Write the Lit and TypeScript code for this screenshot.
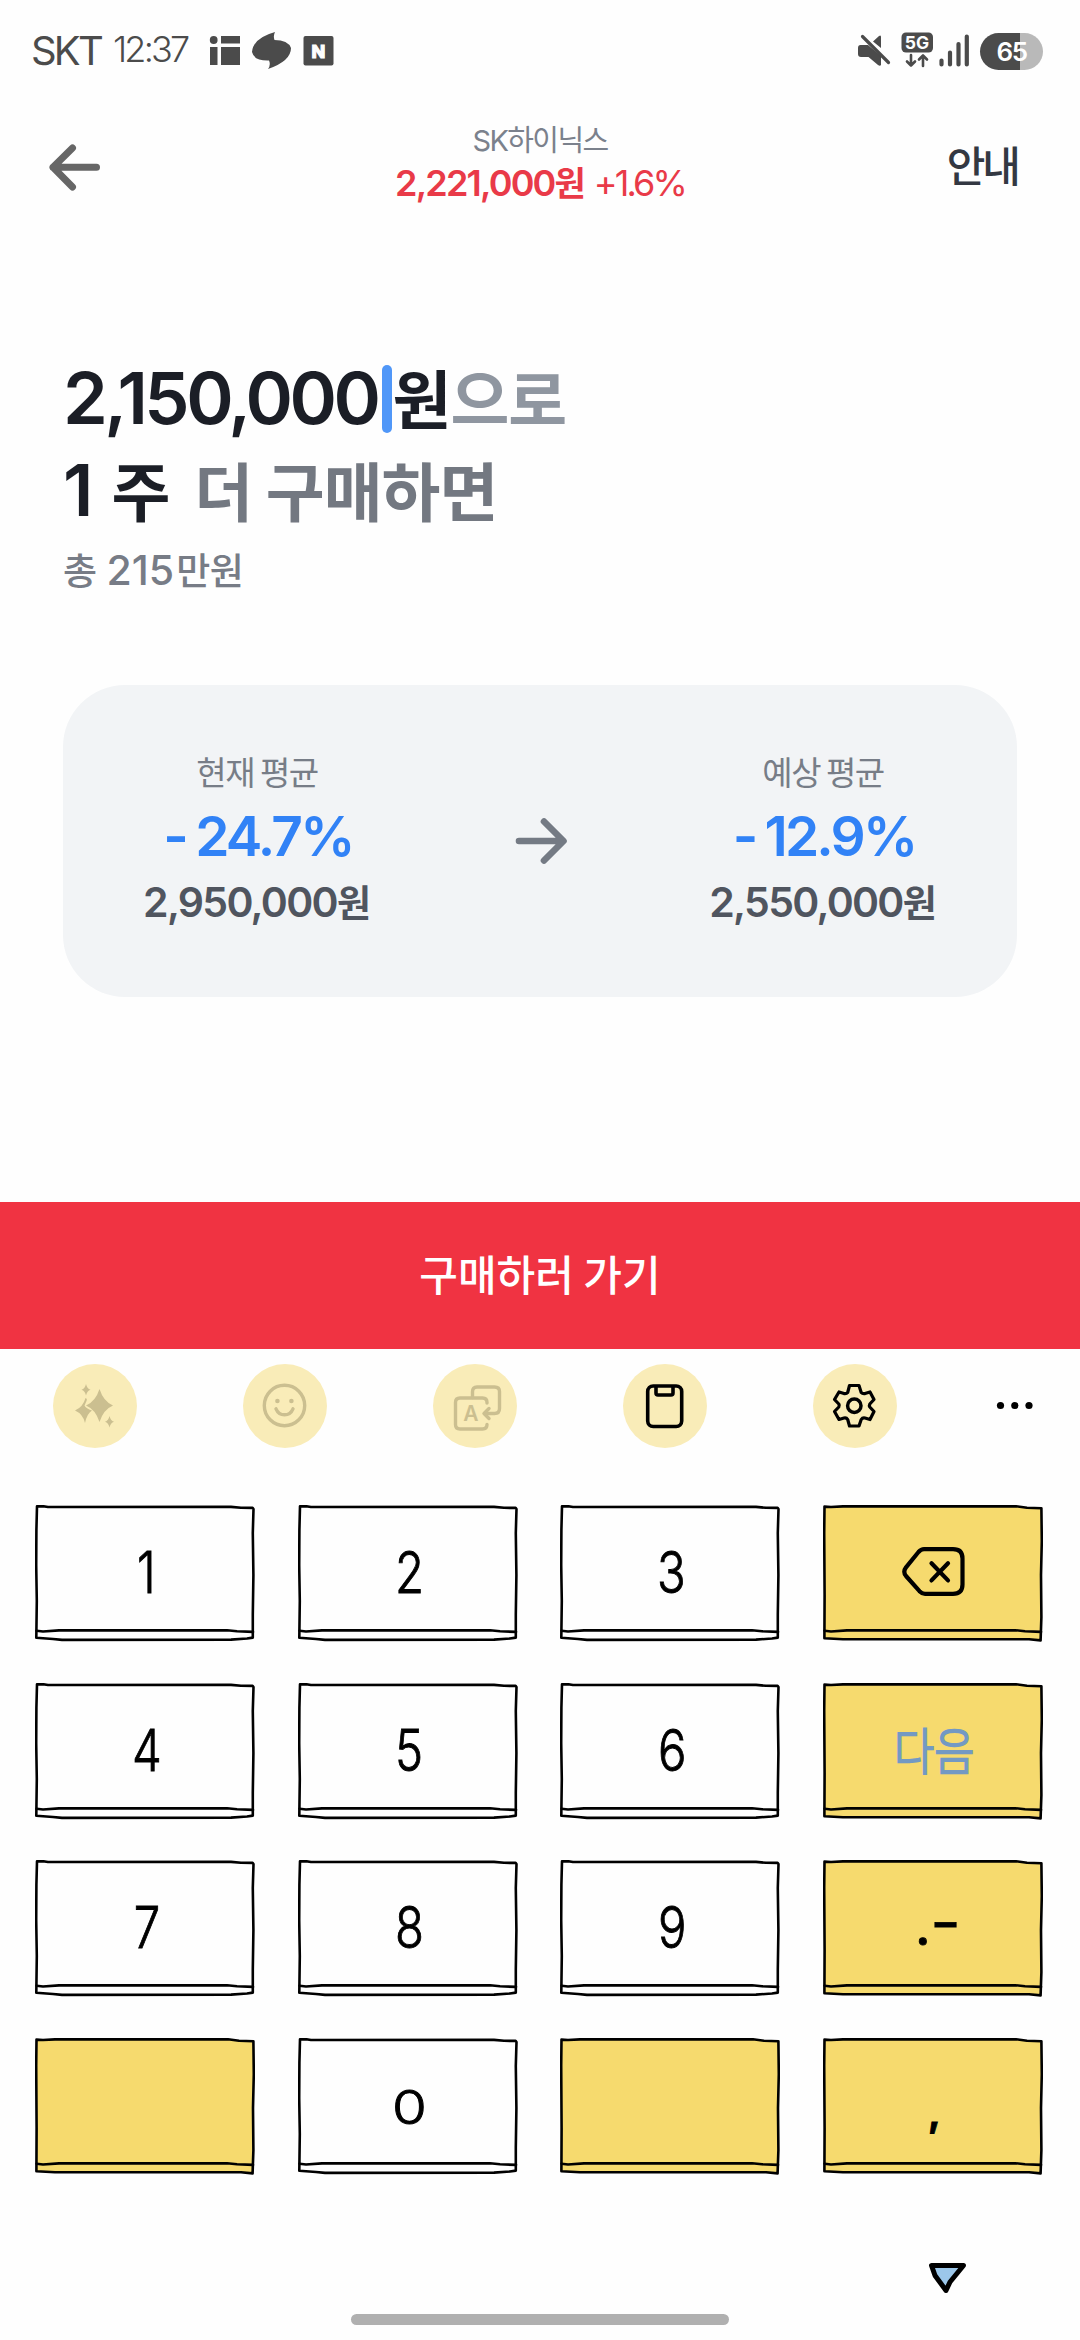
import { LitElement, html, svg, css, nothing } from "lit";
import { customElement, property } from "lit/decorators.js";
import { classMap } from "lit/directives/class-map.js";

type Key = { label?: string; accent?: boolean; kind?: string };

const KEYS: Key[] = [
  { label: "1" }, { label: "2" }, { label: "3" }, { accent: true, kind: "delete" },
  { label: "4" }, { label: "5" }, { label: "6" }, { label: "다음", accent: true, kind: "next" },
  { label: "7" }, { label: "8" }, { label: "9" }, { label: ".-", accent: true, kind: "marks" },
  { accent: true }, { label: "0", kind: "zero" }, { accent: true }, { label: ",", accent: true, kind: "comma" },
];

@customElement("sketch-key")
class SketchKey extends LitElement {
  @property({ attribute: false }) key: Key = {};

  static styles = css`
    :host { display: grid; width: 220px; height: 137px; }
    .frame, .face { grid-area: 1 / 1; }
    .frame { display: block; }
    .line { fill: none; stroke: #000; stroke-width: 2.6; stroke-linejoin: round; stroke-linecap: round; }
    .body { fill: #fefefe; stroke: #000; stroke-width: 2.6; stroke-linejoin: round; }
    .accent .body { fill: #f6da6e; }
    .face {
      display: flex; justify-content: center; align-items: center;
      width: 220px; height: 135px; padding-left: 3px; box-sizing: border-box;
      font-family: Inter, "Noto Sans CJK KR", sans-serif;
      font-weight: 300; font-size: 57px; line-height: 135px; color: #000;
      -webkit-text-stroke: 0.9px currentColor;
    }
    .face span { display: block; transform: scaleX(0.83); }
    .delete svg { margin-top: -2px; }
    .next { font-size: 46px; color: #7399c3; font-family: "Noto Sans CJK KR", sans-serif; line-height: 126px; -webkit-text-stroke-width: 1.8px; }
    .next span { transform: translateY(-2px) scale(0.95, 1.08); }
    .marks { font-weight: 500; font-size: 50px; }
    .marks span { transform: none; }
    .marks .dash { transform: translate(4px, -5px) scaleX(1.3); }
    .comma { font-weight: 700; font-size: 38px; }
    .comma span { transform: translateY(7px); }
    .zero { font-size: 47px; }
    .zero span { transform: translateY(1px) scaleX(1.2); }
  `;

  private face() {
    const { label, kind } = this.key;
    if (kind === "delete") {
      return html`<svg width="64" height="52" viewBox="0 0 64 52">
        <g fill="none" stroke="#000" stroke-width="4.2" stroke-linecap="round" stroke-linejoin="round">
          <path d="M22 3.2 H51 Q60.5 3.2 60.5 12.5 V38.5 Q60.5 47.8 51 47.8 H23 Q20 47.8 17.5 45.2 L4 30 Q0.6 25.8 4 21.4 L16.500 6 Q19 3.2 22 3.2 Z" />
          <path d="M29.5 17.2 L46 34.400 M46 17.2 L29.5 34.400" />
        </g>
      </svg>`;
    }
    if (kind === "marks") return html`<span>.</span><span class="dash">-</span>`;
    return label ? html`<span>${label}</span>` : nothing;
  }

  render() {
    const { accent, kind } = this.key;
    const outline = accent
      ? "M1.5 1.6 L8 2 L20 1.4 L193 1.3 L204 2.8 L218.4 3.2 L218.8 36 L218 70 L218.4 112 L217.6 135.4 L206 134.3 L20 134.2 L1.4 133.3 L1.6 90 L1.2 28 Z"
      : "M2 1.4 L8 1.2 L13 2 L196 1.9 L206 2.8 L217.6 2.9 L218.5 4 L217.8 28 L218.4 70 L217.8 110 L217.8 132.6 L212 133.5 L196 134.6 L27 134.9 L18 134 L1.3 132.8 L1.8 96 L1.2 60 L1.4 25 Z";
    return html`
      <svg class=${classMap({ frame: true, accent: !!accent })} width="220" height="137" viewBox="0 0 220 137">
        <path class="body" d=${outline} />
        <path class="line" d="M1.6 125.7 L8 126.5 L24 125.4 L192 125.2 L202 126.3 L218 126.9" />
      </svg>
      <div class=${classMap({ face: true, [kind ?? "digit"]: true })}>${this.face()}</div>
    `;
  }
}

const disabled = "#cbbf90";
const toolIcons = [
  svg`<g fill=${disabled}>
    <path d="M46.500 25 Q50.500 37.500 60 41.500 Q50.500 45.500 46.500 58 Q42.500 45.500 33 41.500 Q42.500 37.500 46.500 25 Z" />
    <path d="M32.500 34 Q34.500 34.500 33.500 37 L31.500 41.500 Q33 44.500 39 46.500 Q34 49.500 32 59 Q30 50 22 46.500 Q30 43 32.500 34 Z" />
    <path d="M33 20 Q34 24.500 37.500 25.700 Q34 27 33 31.500 Q32 27 28.500 25.700 Q32 24.500 33 20 Z" />
    <path d="M56.500 52 Q57.500 56.500 61 57.700 Q57.500 59 56.500 63.500 Q55.500 59 52 57.700 Q55.500 56.500 56.500 52 Z" />
  </g>`,
  svg`<g fill="none" stroke=${disabled} stroke-width="3.400" stroke-linecap="round">
    <circle cx="41.500" cy="41.500" r="20.200" />
    <path d="M33 44.800 Q35.500 50.800 41.500 50.800 Q47.500 50.800 50 44.800" />
    <circle cx="34.400" cy="37" r="2.300" fill=${disabled} stroke="none" />
    <circle cx="48.400" cy="37" r="2.300" fill=${disabled} stroke="none" />
  </g>`,
  svg`<g fill="none" stroke=${disabled} stroke-width="3.400" stroke-linecap="round" stroke-linejoin="round">
    <path d="M54 39 V38.500 Q54 34 49.500 34 H27 Q22.500 34 22.500 38.500 V60.500 Q22.500 65 27 65 H49.500 Q54 65 54 60.500" />
    <path d="M39.500 33.500 V28 Q39.500 23 44 23 H61.500 Q66.500 23 66.500 27.500 V44.500 Q66.500 49.500 61.500 49.500 H51.500" />
    <path d="M56 44.500 L51 49.500 L56 54.500" />
  </g>
  <text x="38" y="57" text-anchor="middle" font-family="Inter, sans-serif" font-weight="600" font-size="21" fill=${disabled}>A</text>`,
  svg`<g fill="none" stroke="#000" stroke-width="3.600" stroke-linejoin="round">
    <rect x="24.700" y="22" width="34" height="40.500" rx="5.500" />
    <path d="M33 22 V29 Q33 31 35 31 H48 Q50 31 50 29 V22" />
  </g>`,
  svg`<g fill="none" stroke="#000" stroke-width="3.200" stroke-linejoin="round">
    <path d="M36.500 21.500 H46 L48.200 28.500 Q49.500 30 52 29.600 L57 28 L61 35.500 L56.800 40 Q56 41.500 56.800 43 L61 47.500 L57 55.500 L52 54 Q49.500 53.500 48.200 55.500 L46 62 H36.500 L34.700 55.500 Q33.500 53.500 31 54 L26 55.500 L21.500 47.500 L25.800 43 Q26.800 41.500 25.800 40 L21.500 35.500 L26 28 L31 29.600 Q33.500 30 34.700 28.500 Z" />
    <circle cx="41.300" cy="41.700" r="6.700" stroke-width="3.500" />
  </g>`,
];

@customElement("app-root")
export class AppRoot extends LitElement {
  static styles = css`
    :host {
      display: flex; flex-direction: column;
      width: 1080px; height: 2340px; overflow: hidden;
      background: #fefefe; color: #1b1e26;
      font-family: Inter, "Noto Sans CJK KR", sans-serif;
    }
    svg { display: block; flex: none; }
    .ko { font-family: "Noto Sans CJK KR", sans-serif; }

    .status { display: flex; align-items: center; height: 102px; padding: 0 37px 0 31px; box-sizing: border-box; color: #4b4b4b; }
    .carrier { font-size: 40px; line-height: 60px; letter-spacing: -2.8px; width: 82px; white-space: nowrap; }
    .clock { font-size: 36px; line-height: 56px; font-weight: 300; letter-spacing: -2.8px; width: 96px; white-space: nowrap; margin-top: -5px; }
    .status-left, .status-right { height: 42px; }
    .status-right { margin-left: auto; }
    .battery {
      display: flex; align-items: center; justify-content: center;
      width: 63px; height: 37px; margin-left: 9px; border-radius: 19px;
      background: linear-gradient(90deg, #4b4b4b 0 40px, #b9b9b9 40px);
      color: #fff; font-size: 26px; font-weight: 600; letter-spacing: -1.5px;
    }

    .nav { display: grid; grid-template-columns: 240px 1fr 240px; height: 130px; }
    .back { padding: 39px 0 0 46px; }
    .quote { display: flex; flex-direction: column; align-items: center; padding-top: 21px; }
    .name { font-size: 29px; line-height: 36px; letter-spacing: -1.6px; color: #7b818c; white-space: nowrap; }
    .price { display: flex; align-items: baseline; font-size: 36px; line-height: 44px; color: #e93a48; margin-top: 1px; white-space: nowrap; }
    .price .num { font-weight: 600; letter-spacing: -1.8px; }
    .price .unit { font-size: 34px; font-weight: 700; line-height: 44px; }
    .price .pct { letter-spacing: -2.9px; margin-left: 8px; }
    .guide { font-size: 42px; font-weight: 500; letter-spacing: -3px; line-height: 60px; padding: 32px 62px 0 0; text-align: right; color: #333842; }

    .order { height: 453px; padding: 118px 0 0 63px; box-sizing: border-box; }
    .row { display: flex; align-items: baseline; height: 92px; line-height: 92px; font-size: 72px; font-weight: 600; white-space: nowrap; }
    .row .ko { font-size: 64px; font-weight: 700; letter-spacing: -1px; }
    .row .amount { letter-spacing: -3.5px; }
    .row .ju { margin-left: 18px; }
    .row .more-buy { margin-left: 25px; }
    .caret { align-self: center; width: 10px; height: 68px; border-radius: 5px; background: #5097f8; margin: 6px 1px 0 4px; }
    .pale { color: #8f96a0; }
    .grey { color: #737881; }
    .total { display: flex; align-items: baseline; font-size: 41px; line-height: 60px; font-weight: 500; color: #777c86; margin-top: 5px; white-space: nowrap; }
    .total .ko { font-size: 37px; font-weight: 500; letter-spacing: -0.5px; }
    .total .num { margin: 0 2px 0 10px; }

    .card { display: grid; grid-template-columns: 388px 1fr 388px; height: 312px; margin: 0 63px; border-radius: 62px; background: #f2f4f6; }
    .side { display: flex; flex-direction: column; align-items: center; padding-top: 61px; white-space: nowrap; }
    .cap { font-size: 33px; line-height: 50px; letter-spacing: -1.5px; color: #777d87; }
    .rate { font-size: 55px; line-height: 68px; font-weight: 600; color: #3182f6; margin-top: 6px; letter-spacing: -2.8px; padding-left: 2px; }
    .rate .sign { margin-right: 9px; }
    .avg { display: flex; align-items: baseline; font-size: 41px; line-height: 60px; font-weight: 600; color: #50555f; margin-top: 1px; letter-spacing: -1.7px; }
    .avg .ko { font-size: 37px; font-weight: 700; letter-spacing: 0; }
    .mid { display: flex; justify-content: center; align-items: center; padding-left: 2px; }

    .buy {
      display: flex; align-items: center; justify-content: center; height: 147px; margin-top: 205px;
      padding-bottom: 7px; box-sizing: border-box;
      background: #f03342; color: #fff; font-family: "Noto Sans CJK KR", sans-serif;
      font-size: 42px; font-weight: 500;
    }

    .tools { display: flex; align-items: center; height: 84px; padding: 15px 0 0 53px; gap: 106px; }
    .tool { width: 84px; height: 84px; border-radius: 50%; background: #f9ecb8; flex: none; }
    .more { margin-left: -7px; }
    .keys { display: grid; grid-template-columns: repeat(4, 220px); grid-auto-rows: 137px; gap: 40.7px 42.6px; padding: 57px 0 0 35px; }
    .foot { display: flex; flex-direction: column; align-items: center; margin-top: 85px; }
    .hide { align-self: flex-end; margin-right: 112px; }
    .home { width: 378px; height: 11px; border-radius: 6px; background: #b0b0b0; margin-top: 18px; }
  `;

  private average(caption: string, rate: string, amount: string) {
    return html`<div class="side">
      <div class="cap ko">${caption}</div>
      <div class="rate"><span class="sign">-</span>${rate}</div>
      <div class="avg"><span>${amount}</span><span class="ko">원</span></div>
    </div>`;
  }

  render() {
    return html`
      <header class="status">
        <span class="carrier">SKT</span>
        <span class="clock">12:37</span>
        <svg class="status-left" width="128" height="42" viewBox="209 31 128 42" fill="#4b4b4b">
          <circle cx="213.700" cy="41" r="3.900" />
          <path d="M221 37 H240 V44.500 H221 Z M210 48 H217.500 V66 H210 Z M221 48 H240 V66 H221 Z" />
          <path d="M275 33 Q273 37 274.500 41 Q288 41 291 49 Q291 62 268 70 Q271 66 269 61.500 Q254 62 252 53 Q253 39 275 33 Z" />
          <rect x="303.500" y="37" width="30" height="29.500" rx="2" />
          <text x="318.500" y="58.500" text-anchor="middle" fill="#fefefe" stroke="#fefefe" stroke-width="1" font-family="Inter, sans-serif" font-weight="800" font-size="18">N</text>
        </svg>
        <svg class="status-right" width="114" height="42" viewBox="857 30 114 42" fill="#4b4b4b">
          <path d="M860.500 45 H868 L881 56 V65 Q880 66.500 878 65 L868.500 57 H861 Q858 57 858 54 V48 Q858 45 860.500 45 Z M873 41.500 L879 36 Q881 34.500 881 37 V48 Z" />
          <path d="M862.500 36.500 L888.500 62.500" stroke="#4b4b4b" stroke-width="3.200" stroke-linecap="round" />
          <rect x="901.500" y="32.500" width="31.500" height="20" rx="4.500" />
          <text x="917" y="48.700" text-anchor="middle" fill="#fefefe" font-family="Inter, sans-serif" font-weight="700" font-size="17.500">5G</text>
          <g fill="none" stroke="#4b4b4b" stroke-width="2.600" stroke-linecap="round" stroke-linejoin="round">
            <path d="M911 55 V65.500 M907 61.500 L911 65.500 L915 61.500 M923 66 V55.500 M919 59.500 L923 55.500 L927 59.500" />
          </g>
          <g stroke="#4b4b4b" stroke-width="4.200" stroke-linecap="round">
            <path d="M941.500 60.500 V64.500 M950 52.500 V64.500 M958.500 44 V64.500 M966.800 36.500 V64.500" />
          </g>
        </svg>
        <div class="battery">65</div>
      </header>

      <nav class="nav">
        <div class="back">
          <svg width="58" height="52" viewBox="46 141 58 52" fill="none" stroke="#666" stroke-width="7" stroke-linecap="round" stroke-linejoin="round">
            <path d="M96.500 167.300 H53 M72.500 148 L53 167.300 L72.500 187" />
          </svg>
        </div>
        <div class="quote">
          <div class="name">SK하이닉스</div>
          <div class="price"><span class="num">2,221,000</span><span class="unit ko">원</span><span class="pct">+1.6%</span></div>
        </div>
        <div class="guide ko">안내</div>
      </nav>

      <section class="order">
        <div class="row"><span class="amount">2,150,000</span><i class="caret"></i><span class="ko">원</span><span class="ko pale">으로</span></div>
        <div class="row"><span>1</span><span class="ko ju">주</span><span class="ko grey more-buy">더 구매하면</span></div>
        <div class="total"><span class="ko">총</span><span class="num">215</span><span class="ko">만원</span></div>
      </section>

      <section class="card">
        ${this.average("현재 평균", "24.7%", "2,950,000")}
        <div class="mid">
          <svg width="58" height="52" viewBox="0 0 58 52" fill="none" stroke="#747a84" stroke-width="6.600" stroke-linecap="round" stroke-linejoin="round">
            <path d="M7 26 H51 M32 6.500 L51.500 26 L32 45.500" />
          </svg>
        </div>
        ${this.average("예상 평균", "12.9%", "2,550,000")}
      </section>

      <div class="buy">구매하러 가기</div>

      <div class="tools">
        ${toolIcons.map((icon) => html`<div class="tool"><svg width="84" height="84" viewBox="0 0 84 84">${icon}</svg></div>`)}
        <svg class="more" width="40" height="12" viewBox="0 0 40 12">
          <circle cx="4.500" cy="5.500" r="3.600" /><circle cx="18.800" cy="5.500" r="3.600" /><circle cx="33" cy="5.500" r="3.600" />
        </svg>
      </div>

      <div class="keys">${KEYS.map((key) => html`<sketch-key .key=${key}></sketch-key>`)}</div>

      <footer class="foot">
        <svg class="hide" width="42" height="36" viewBox="925 2260 42 36">
          <path d="M930.500 2265.500 L962.500 2265.500 L949 2282 L945 2290.500 L934 2275.500 Z" fill="#9cc7ea" stroke="#000" stroke-width="5" stroke-linejoin="round" />
        </svg>
        <div class="home"></div>
      </footer>
    `;
  }
}
